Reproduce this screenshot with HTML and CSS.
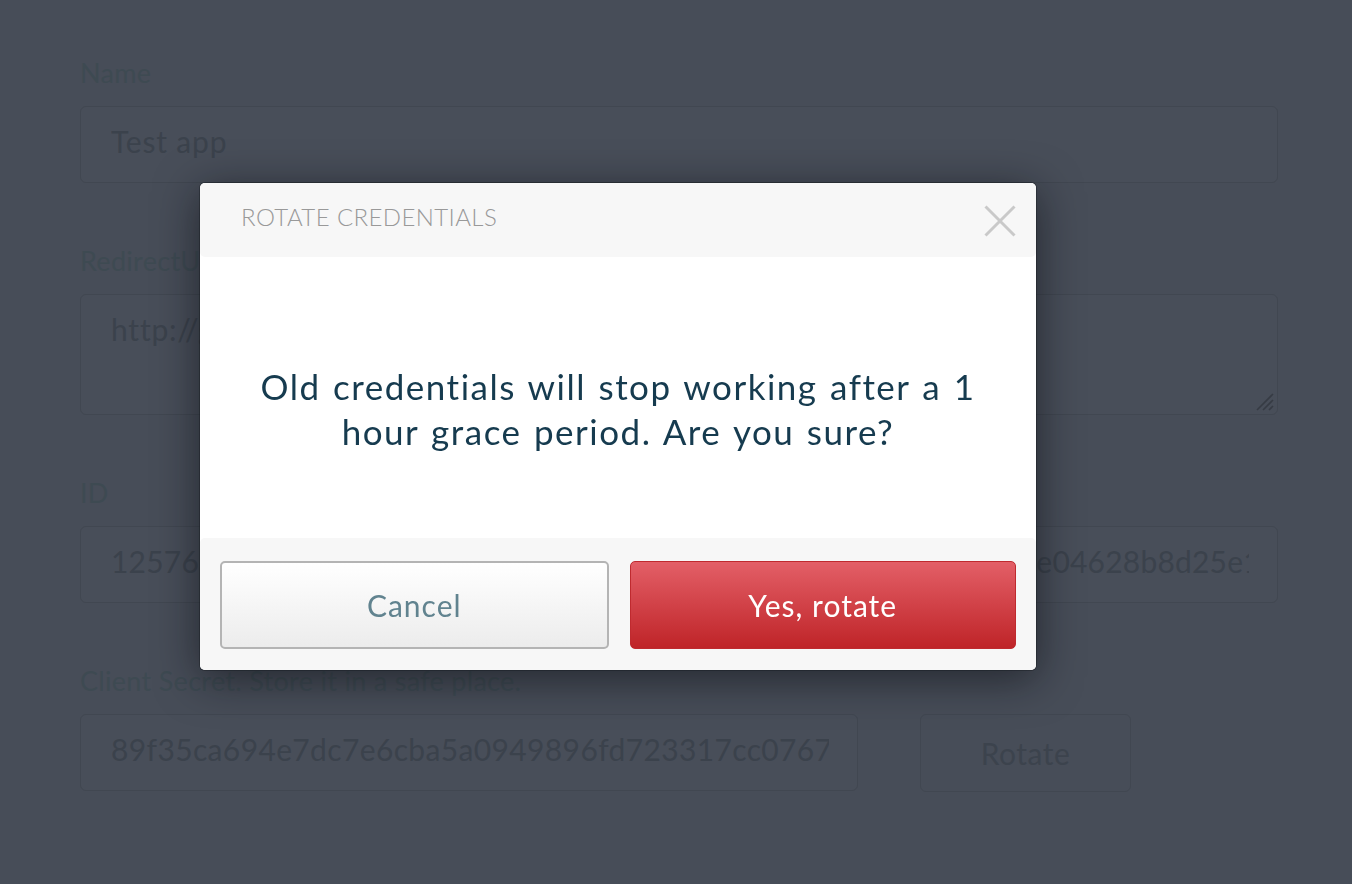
FILE: index.html
```html
<!DOCTYPE html>
<html lang="en">
<head>
<meta charset="utf-8">
<title>Rotate credentials</title>
<link rel="stylesheet" href="styles.css">
</head>
<body>
<main class="page">
  <div class="field">
    <label class="label">Name</label>
    <div class="input"><div class="value">Test app</div></div>
  </div>
  <div class="field">
    <label class="label">RedirectUri</label>
    <div class="textarea">
      <div class="value">http://google.com</div>
      <svg class="grip" width="22" height="22" viewBox="0 0 22 22"><path d="M21 5 L5 21 M21 11 L11 21 M21 17 L17 21" stroke="#363b44" stroke-width="1.6" fill="none"/></svg>
    </div>
  </div>
  <div class="field">
    <label class="label">ID</label>
    <div class="input"><div class="value id-hash">12576a8c3f0d9b2e7a41c65f08d3b9e2a7c4f1b0d6e93a5c7f2b8e40e04628b8d25e1f3a9c</div></div>
  </div>
  <div class="field">
    <label class="label">Client Secret. Store it in a safe place.</label>
    <div class="row">
      <div class="input secret"><div class="value secret-hash">89f35ca694e7dc7e6cba5a0949896fd723317cc0767e2b9a14f</div></div>
      <div class="btn-rotate">Rotate</div>
    </div>
  </div>
</main>

<div class="overlay">
  <div class="modal">
    <div class="modal-header">
      <div class="modal-title">ROTATE CREDENTIALS</div>
      <svg class="close" width="32" height="32" viewBox="0 0 32 32"><path d="M1.5 1.5 L30.5 30.5 M30.5 1.5 L1.5 30.5" stroke="#c9c9c9" stroke-width="3" fill="none"/></svg>
    </div>
    <div class="modal-body">
      <p class="message">Old credentials will stop working after a 1 hour grace period. Are you sure?</p>
    </div>
    <div class="modal-footer">
      <div class="btn btn-cancel">Cancel</div>
      <div class="btn btn-danger">Yes, rotate</div>
    </div>
  </div>
</div>
</body>
</html>
```
FILE: styles.css
```css
* { box-sizing: border-box; }
html, body { margin: 0; padding: 0; }
body {
  background: #474d58;
  font-family: "Lato", "Liberation Sans", sans-serif;
  width: 1352px;
  height: 884px;
  overflow: hidden;
}
.page {
  padding: 57px 74px 0 80px;
  display: flex;
  flex-direction: column;
}
.field {
  display: flex;
  flex-direction: column;
  margin-bottom: 62px;
}
.label {
  font-size: 27px;
  line-height: 32px;
  color: #3e4a52;
  letter-spacing: 0.3px;
  margin-bottom: 17px;
}
.input, .textarea {
  border: 1px solid #414751;
  border-radius: 6px;
  background: #484e59;
  padding: 16px 28px 0 30px;
  font-size: 30px;
  line-height: 36px;
  color: #3b424c;
  letter-spacing: 0.8px;
  height: 77px;
}
.textarea {
  height: 121px;
  position: relative;
}
.value {
  white-space: nowrap;
  overflow: hidden;
}
.id-hash { letter-spacing: 0.2px; }
.secret-hash { letter-spacing: 0.36px; }
.grip {
  position: absolute;
  right: 3px;
  bottom: 3px;
}
.row {
  display: flex;
  gap: 62px;
}
.secret { width: 778px; }
.btn-rotate {
  width: 211px;
  height: 78px;
  border: 1px solid #414751;
  border-radius: 6px;
  display: flex;
  align-items: center;
  justify-content: center;
  font-size: 30px;
  letter-spacing: 0.5px;
  color: #3c434d;
}

.overlay {
  position: fixed;
  inset: 0;
}
.modal {
  position: absolute;
  left: 200px;
  top: 183px;
  width: 836px;
  height: 487px;
  background: #fff;
  border-radius: 5px;
  box-shadow: 0 0 0 1px rgba(20, 24, 30, 0.4), 0 8px 44px rgba(10, 12, 16, 0.6);
  display: flex;
  flex-direction: column;
}
.modal-header {
  height: 74px;
  background: #f7f7f7;
  border-radius: 5px;
  display: flex;
  align-items: center;
  justify-content: space-between;
  padding: 0 20px 0 41px;
}
.modal-title {
  font-size: 24px;
  font-weight: 300;
  color: #999999;
  letter-spacing: 0.4px;
  margin-bottom: 8px;
}
.close { display: block; margin-top: 2px; }
.modal-body {
  height: 281px;
  padding: 107px 40px 0;
}
.message {
  margin: 0;
  text-align: center;
  font-size: 35px;
  line-height: 45px;
  letter-spacing: 1.5px;
  word-spacing: 2px;
  color: #163b4f;
}
.modal-footer {
  flex: 1;
  background: #f7f7f7;
  border-radius: 5px;
  display: flex;
  gap: 21px;
  padding: 23px 20px 21px;
}
.btn {
  flex: 1 1 0;
  min-width: 0;
  border-radius: 5px;
  display: flex;
  align-items: center;
  justify-content: center;
  font-size: 30px;
  letter-spacing: 1px;
}
.btn-cancel {
  border: 2px solid #b4b4b4;
  background: linear-gradient(#ffffff, #ececec);
  color: #61838f;
}
.btn-danger {
  border: 1px solid #bf2a2f;
  background: linear-gradient(#e35f67, #bf2428);
  color: #ffffff;
}
```
